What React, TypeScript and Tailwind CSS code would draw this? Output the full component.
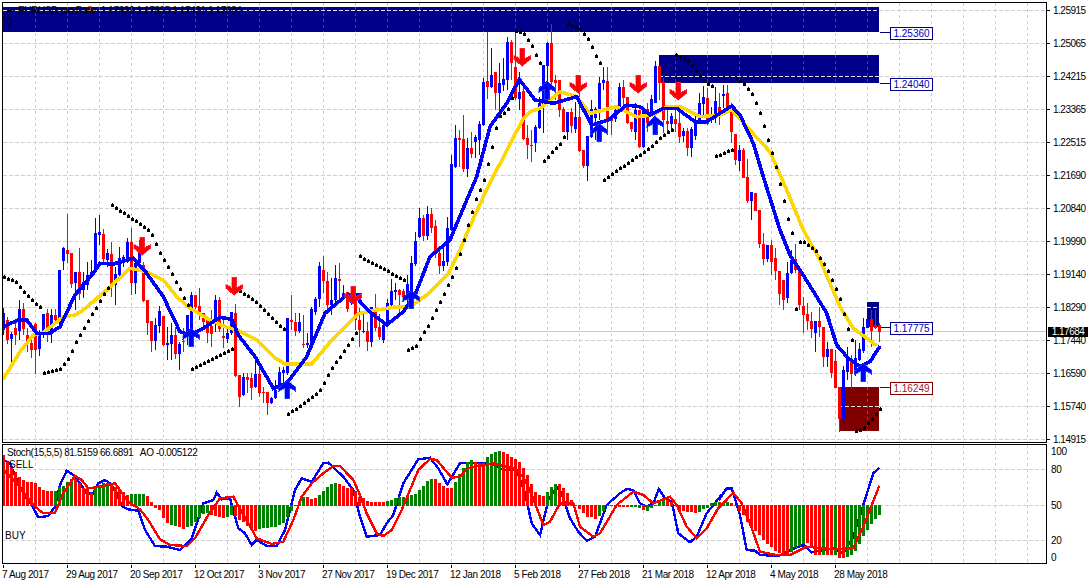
type Pt = [number, number];
type Candle = [string, number, number, number, number];

const candlesRaw: [number, Candle[]][] = [
  [220, [
    ["b",280,330,265,345],["r",300,360,290,372],["b",343,358,335,430],["r",325,345,300,375],["b",268,332,240,360],
    ["r",268,328,250,345],["r",345,372,325,395],["r",370,390,345,415],["r",312,390,310,462],["b",340,386,330,408],
    ["b",282,345,282,355],["r",280,345,268,365],["b",285,335,268,368],["r",285,300,268,310],["b",150,300,150,320],
    ["b",85,122,80,150],["r",90,102,-18,130],["r",100,192,100,205],["b",155,190,155,270],["r",155,222,85,240],
    ["b",185,210,155,235],["b",165,195,125,210],["b",155,170,120,175],["b",40,150,-6,155],["b",35,45,-15,75],
    ["r",42,118,27,130],["b",100,120,88,140],["r",102,195,65,230],["b",162,195,140,255],["b",115,165,80,175],
    ["b",112,125,105,140],["b",65,120,55,130],["r",65,190,25,225],["b",130,190,125,222],["b",85,130,60,135],
    ["r",135,243,125,245],["r",240,308,240,345],["r",302,362,302,395],["b",315,362,295,390],["b",272,318,258,340],
    ["r",288,375,288,378],["b",370,375,320,420],["b",345,372,310,420],["r",345,402,320,418],["b",372,402,365,450],
    ["r",362,365,325,395],["b",285,350,285,375],["b",225,375,215,378],["r",225,262,225,270],["r",258,275,205,300],
    ["r",278,305,278,325],["r",300,340,300,370],["r",318,342,270,380],["b",240,300,225,335],["r",240,328,230,335],
    ["r",348,355,300,385],["b",340,358,320,370],["b",275,340,275,345],["r",280,468,252,470],["r",465,532,465,560],
    ["b",470,525,460,528],["r",472,480,460,520],["r",475,505,460,540],["b",462,502,420,505],["r",462,520,430,530],
    ["r",515,520,500,550],["r",515,550,515,585],["b",535,548,530,552],["b",510,535,480,538],["b",455,510,440,512],
    ["b",450,460,440,490],["b",295,460,295,465],["r",300,305,225,330],["r",305,332,280,348],["b",305,332,280,340],
    ["r",372,375,285,385],["b",370,375,340,385],["b",268,372,260,375],["b",238,275,230,285],["b",138,238,125,260],
    ["r",150,183,108,220],["r",183,255,155,270],["b",240,255,175,285],["b",175,240,135,245],["r",178,182,130,240],
    ["b",220,235,195,240],["r",215,268,215,275],["b",220,250,200,255],["r",238,300,230,330],["r",300,330,265,380],
  ]],
  [200, [
    ["b",393,397,340,400],["r",393,425,365,452],["b",322,425,320,440],["r",328,385,282,392],["r",382,410,342,420],
    ["b",375,420,375,428],["b",310,375,298,378],["b",272,315,238,325],["b",270,275,250,300],["r",270,285,268,335],
    ["r",272,290,268,305],["b",252,300,225,310],["b",190,325,168,328],["b",123,192,95,198],["b",55,112,25,115],
    ["r",55,108,45,122],["b",42,108,18,120],["r",42,85,25,100],["r",78,160,60,175],["r",160,198,150,222],
    ["b",183,198,130,212],["b",85,185,50,198],
  ]],
  [0, [
    ["b",492,690,465,692],["b",415,500,375,505],["r",415,420,390,500],["r",417,508,345,515],["b",445,508,415,530],
    ["r",445,462,395,475],["b",412,425,405,475],["b",372,420,362,465],["b",245,375,235,378],["r",243,260,95,298],
    ["b",225,262,145,265],["r",215,280,215,330],["b",250,280,190,330],["b",238,255,175,272],["b",127,240,110,270],
    ["r",125,188,120,240],["r",200,295,100,300],["b",275,298,215,330],["r",272,417,265,420],["r",415,435,375,478],
    ["r",435,438,390,485],["b",382,428,375,455],["b",310,385,290,388],["b",195,315,195,400],["b",130,198,127,265],
    ["r",130,245,72,265],["r",240,250,225,300],["r",240,330,240,350],["r",328,395,320,395],["b",335,395,335,420],
    ["r",335,378,325,400],["b",350,387,305,400],["r",350,452,265,455],["r",450,498,450,505],["b",408,498,408,542],
    ["b",328,410,300,415],["b",328,355,320,420],["b",248,330,230,360],["b",240,250,200,270],["r",243,362,200,405],
    ["r",358,362,350,405],["b",330,358,325,365],["b",260,330,250,332],["r",260,295,240,320],["r",290,368,290,372],
    ["r",365,388,365,395],["b",330,395,310,420],["r",330,440,330,445],["b",330,440,330,445],["r",328,370,310,395],
    ["b",297,345,285,348],["b",198,308,183,310],["r",198,250,198,300],["r",245,360,235,400],["r",362,372,330,400],
    ["b",348,372,338,395],["r",358,372,320,395],["r",368,410,330,428],["b",392,408,385,425],["r",392,445,385,468],
    ["b",388,445,380,472],["b",360,408,335,420],["b",310,368,280,372],["b",290,312,258,345],["r",295,372,265,375],
    ["b",343,352,320,370],["b",303,345,262,370],["r",320,345,280,375],
    ["b",283,287,255,325],["r",280,325,255,335],["r",320,395,310,430],["r",402,480,402,495],["b",450,483,435,512],
    ["r",450,535,445,535],["r",532,603,478,610],["b",575,603,575,660],["r",580,632,580,632],
  ]],
  [230, [
    ["r",-60,42,-60,55],["r",42,88,10,105],["b",45,88,45,95],["r",45,95,30,135],["r",85,122,55,150],
    ["r",122,192,122,225],["r",150,210,150,240],["b",130,205,95,220],["b",90,130,60,132],["r",88,120,42,130],
    ["r",118,225,118,240],["r",228,255,200,308],["r",252,272,220,300],["r",272,298,245,325],["b",272,310,272,365],
    ["r",272,292,230,320],["r",292,380,290,410],["b",358,380,335,410],["r",358,430,358,445],["r",392,473,360,475],
    ["r",470,567,470,605],["b",420,567,408,595],["b",385,425,350,450],["r",390,432,375,478],["b",385,432,330,438],
    ["b",358,390,340,392],["b",290,362,265,370],["b",268,295,268,295],["r",268,302,240,350],["r",285,293,240,298],
    ["r",285,305,280,335],
  ]],
];

const candles = candlesRaw.flatMap(([base, rows]) =>
  rows.map(([c, top, bot, hi, lo]) => ({
    c,
    top: Math.round(base + top / 3),
    bot: Math.round(base + bot / 3),
    hi: Math.round(base + hi / 3),
    lo: Math.round(base + lo / 3),
  })),
);

// crops were read at 3x, so go back to page pixels
const z = (ox: number, oy: number, pts: Pt[]): Pt[] => pts.map(([x, y]) => [ox + x / 3, oy + y / 3]);
const toPoints = (pts: Pt[]) => pts.map(([x, y]) => `${x.toFixed(1)},${y.toFixed(1)}`).join(" ");

const yellowLine: Pt[] = [
  ...z(0, 220, [[9,478],[60,395],[100,345],[130,338],[190,290],[225,285],[250,270],[320,210],[390,145],[440,155],[490,180],[530,230],[570,265],[630,300],[680,322],[710,330],[770,360],[820,410],[855,432],[935,432],[1000,355],[1077,280]]),
  ...z(360, 200, [[0,340],[50,330],[100,322],[150,320],[200,285],[265,220],[300,150]]),
  ...z(360, 0, [[325,690],[370,590],[410,510],[490,355],[510,335],[540,325],[600,275],[650,290],[690,340],[770,320],[830,350],[880,345],[920,320],[960,320],[1020,350],[1080,345]]),
  ...z(720, 0, [[35,330],[80,380],[150,455],[200,570],[250,690]]),
  ...z(720, 230, [[300,90],[360,230],[400,295],[470,347]]),
];

const blueLine: Pt[] = [
  ...z(0, 220, [[9,320],[55,300],[80,300],[110,340],[150,340],[180,320],[225,225],[280,160],[300,130],[340,132],[400,115],[440,160],[490,230],[540,335],[570,345],[610,325],[660,292],[695,298],[715,345],[765,410],[820,505],[860,490],[920,410],[975,280],[1040,225],[1077,225]]),
  ...z(360, 200, [[0,305],[35,340],[80,375],[130,335],[165,285],[210,170],[270,120]]),
  ...z(360, 0, [[320,600],[350,530],[390,380],[440,310],[478,238],[525,300],[580,310],[650,290],[695,375],[745,360],[800,315],[840,320],[870,345],[910,325],[950,325],[1005,365],[1040,365],[1080,340]]),
  ...z(720, 0, [[35,318],[60,345],[100,430],[130,530],[180,690]]),
  ...z(720, 230, [[210,75],[240,120],[290,200],[320,250],[350,345],[385,385],[420,410],[450,395],[480,348]]),
];

const sarSegments: Pt[][] = [
  z(0, 220, [[9,170],[45,185],[69,213],[117,262]]),
  z(0, 220, [[129,460],[177,448],[201,420],[225,370],[285,265],[321,205]]),
  [...z(0, 0, [[334,615],[442,688]]), ...z(0, 220, [[455,45],[478,97],[513,160],[538,207],[561,255]])],
  z(0, 220, [[573,447],[620,425],[693,388]]),
  z(0, 220, [[705,203],[765,245],[850,328]]),
  z(0, 220, [[861,583],[900,558],[960,510],[990,450],[1020,408],[1065,340]]),
  [...z(0, 220, [[1077,108]]), ...z(360, 200, [[0,170],[130,240]])],
  [...z(360, 200, [[142,450],[166,438],[202,378],[250,282],[285,210],[322,78]]), ...z(360, 0, [[345,602],[370,542],[395,440],[405,388],[420,345],[442,330],[453,295]])],
  z(360, 0, [[465,93],[490,100],[515,138],[538,190]]),
  z(360, 0, [[550,483],[598,432],[610,412]]),
  z(360, 0, [[622,72],[660,87],[682,117],[718,190]]),
  z(360, 0, [[730,540],[800,490],[860,450],[910,405],[933,390]]),
  z(360, 0, [[945,165],[982,183],[1005,212],[1030,243],[1053,258]]),
  [...z(360, 0, [[1065,470]]), ...z(720, 0, [[33,450]])],
  [...z(720, 0, [[45,237],[70,250],[95,283],[118,336],[142,417],[166,500],[190,602],[202,654]]), ...z(720, 230, [[214,10]])],
  z(720, 230, [[226,237]]),
  z(720, 230, [[238,36],[250,36],[286,63],[322,122],[358,205],[382,295],[394,330]]),
  z(720, 230, [[406,603],[430,595],[454,567],[478,538]]),
];

function sarDots(seg: Pt[]): Pt[] {
  const first = Math.round((seg[0][0] - 3.5) / 4);
  const last = Math.round((seg[seg.length - 1][0] - 3.5) / 4);
  const out: Pt[] = [];
  for (let k = first; k <= last; k++) {
    const x = 3 + 4 * k;
    let y = seg[0][1];
    for (let i = 0; i < seg.length - 1; i++) {
      const [x0, y0] = seg[i];
      const [x1, y1] = seg[i + 1];
      if (x + 0.5 >= x0 && x + 0.5 <= x1) y = y0 + ((x + 0.5 - x0) / (x1 - x0 || 1)) * (y1 - y0);
      else if (x + 0.5 > x1) y = y1;
    }
    out.push([x, Math.round(y)]);
  }
  return out;
}

const redArrows: Pt[] = [[142,237],[234,277],[353,286],[522,48],[578,75],[638,75],[678,82]];
const blueArrows: Pt[] = [[191,328],[287,380],[411,290],[547,81],[599,123],[655,116],[863,363]];

// AO histogram: colour + end of the bar in 3x crop pixels, 197 is the zero line
const ao = "r45 r65 r80 r95 r110 r120 r125 r125 r130 r140 r150 r153 r153 g153 g140 g138 g125 g118 r118 r130 r145 r145 r160 g140 g135 g130 g128 r130 r140 r150 r155 r165 g162 g162 g162 g162 r168 r185 r205 r210 r235 r250 g255 g258 r262 r266 g262 g258 g245 g235 g222 g220 r225 r228 r232 r235 g232 g225 r228 r240 r247 r258 r265 r272 g268 g265 g265 g262 g260 g255 g248 g232 g212 g197 g183 g170 r170 r178 r175 g165 g152 g140 g132 g130 r132 r138 r145 r145 r152 r170 r175 r182 r185 r185 r186 r186 g184 g180 g175 g172 g170 g168 g165 g162 g150 g138 g124 g118 r118 r128 r138 r143 r145 g127 g103 g85 g65 g60 r65 r68 r70 g50 g42 g35 g33 r36 r42 r50 r58 r65 r85 r105 r132 r155 r165 r167 g155 g140 g132 r132 r145 r160 r180 r195 r208 r220 r230 r232 r236 g228 g212 g198 g198 r200 r200 r202 r202 g202 g202 g204 r210 g212 g205 g195 g185 g178 r180 r185 r195 r210 r212 r215 r217 r220 g215 g208 g203 g190 g186 g185 g190 g187 r190 r198 r212 r225 r245 r260 r272 r285 r300 r312 r322 r332 r340 r345 r345 g335 g325 g318 g312 r310 r322 r345 r345 g345 r345 r345 g345 r353 r355 g350 g345 g332 g312 g288 g270 g252 g237 g225"
  .split(" ")
  .map((s) => ({ c: s[0], v: Number(s.slice(1)) }));

const stochBlue: Pt[] = [
  ...z(0, 440, [[10,60],[30,70],[55,130],[75,170],[95,195],[115,232],[145,228],[165,200],[180,135],[200,92],[225,108],[260,160],[280,160],[295,130],[315,120],[330,130],[350,160],[365,198],[385,208],[415,212],[435,270],[465,318],[500,320],[540,330],[575,295],[610,190],[640,180],[650,158],[665,178],[690,175],[715,265],[735,280],[755,315],[770,300],[800,318],[830,318],[855,270],[885,150],[905,115],[935,125],[970,70],[985,68],[1030,110],[1060,150],[1080,230]]),
  ...z(360, 440, [[20,290],[60,285],[80,250],[100,225],[130,130],[175,58],[210,53],[235,85],[262,133],[300,70],[320,68],[400,72],[430,90],[470,90],[495,160],[515,250],[540,285],[565,180],[590,140],[605,160],[630,235],[655,275],[680,303],[705,290],[740,195],[780,160],[800,147],[820,150],[840,190],[860,200],[880,190],[897,147],[915,175],[935,185],[955,280],[990,307],[1010,290],[1040,220],[1080,170]]),
  ...z(720, 440, [[0,175],[20,145],[35,145],[60,225],[80,330],[105,332],[120,345],[175,348],[210,330],[250,315],[275,337],[340,325],[370,340],[400,290],[430,195],[460,100],[478,83]]),
];

const stochRed: Pt[] = [
  ...z(0, 440, [[10,90],[50,130],[80,170],[105,200],[130,220],[165,218],[190,160],[225,107],[245,120],[265,145],[300,140],[345,130],[385,185],[420,208],[445,240],[480,298],[510,315],[560,318],[585,295],[625,225],[660,175],[700,170],[745,250],[770,295],[815,312],[850,305],[880,240],[905,170],[935,130],[970,100],[1000,78],[1020,78],[1060,120],[1080,165]]),
  ...z(360, 440, [[0,165],[20,220],[50,280],[70,288],[95,270],[125,210],[175,90],[210,57],[230,60],[275,113],[300,110],[320,85],[400,70],[460,85],[490,110],[515,165],[550,255],[570,245],[600,190],[640,190],[660,260],[700,290],[720,280],[770,195],[820,155],[850,165],[880,190],[930,170],[950,195],[980,260],[1010,295],[1040,265],[1080,195]]),
  ...z(720, 440, [[0,200],[40,158],[65,190],[90,250],[120,335],[170,345],[210,345],[260,320],[340,328],[400,325],[430,260],[478,137]]),
];

const gridX = Array.from({ length: 32 }, (_, i) => 35 + 32 * i).filter((x) => x < 1046);
const gridY = [10, 43, 76, 109, 142, 175, 208, 241, 274, 307, 340, 373, 406, 439];
const bands = [
  { x: 3, y: 7, w: 876, h: 25, fill: "#00008b", vert: "#3c3ca6", lines: [10] },
  { x: 659, y: 55, w: 220, h: 28, fill: "#00008b", vert: "#3c3ca6", lines: [76] },
  { x: 867, y: 302, w: 12, h: 25, fill: "#00008b", vert: "#3c3ca6", lines: [307] },
  { x: 839, y: 387, w: 40, h: 44, fill: "#800000", vert: "#a04040", lines: [406] },
];

const priceLabels = ["1.25915","1.25065","1.24215","1.23365","1.22515","1.21690","1.20840","1.19990","1.19140","1.18290","1.17440","1.16590","1.15740","1.14915"];
const dates = ["7 Aug 2017","29 Aug 2017","20 Sep 2017","12 Oct 2017","3 Nov 2017","27 Nov 2017","19 Dec 2017","12 Jan 2018","5 Feb 2018","27 Feb 2018","21 Mar 2018","12 Apr 2018","4 May 2018","28 May 2018"];

function PriceTag({ text, className }: { text: string; className: string }) {
  return (
    <div className={`absolute left-[887px] flex h-[13px] w-[43px] items-center justify-center border bg-white text-[10px] leading-none ${className}`}>
      {text}
    </div>
  );
}

function MainChart() {
  return (
    <svg width="1043" height="439" viewBox="3 3 1043 439" shapeRendering="crispEdges" className="block">
      {gridX.map((x) => (
        <line key={x} x1={x + 0.5} x2={x + 0.5} y1={3} y2={442} stroke="#cfcfcf" strokeDasharray="3 3" />
      ))}
      {gridY.map((y) => (
        <line key={y} x1={3} x2={1046} y1={y + 0.5} y2={y + 0.5} stroke="#cfcfcf" strokeDasharray="4 2" />
      ))}
      <line x1={3} x2={1046} y1={331.5} y2={331.5} stroke="#c8c8c8" />
      {bands.map((b) => (
        <g key={b.x}>
          <rect x={b.x} y={b.y} width={b.w} height={b.h} fill={b.fill} />
          {gridX
            .filter((x) => x > b.x && x < b.x + b.w)
            .map((x) => (
              <line key={x} x1={x + 0.5} x2={x + 0.5} y1={b.y} y2={b.y + b.h} stroke={b.vert} strokeDasharray="3 3" />
            ))}
          {b.lines.map((y) => (
            <line key={y} x1={b.x} x2={b.x + b.w} y1={y + 0.5} y2={y + 0.5} stroke="#e4e4e4" strokeDasharray="4 2" />
          ))}
        </g>
      ))}
      <path d="M880 32.5H890M880 83.5H890M880 327.5H890" stroke="#00008b" />
      <path d="M880 387.5H890" stroke="#800000" />
      <rect x={90} y={6} width={1} height={4} fill="#e8a020" />
      {candles.map((c, k) => {
        const color = c.c === "b" ? "#0000ff" : "#ff0000";
        const x = 2 + 4 * k;
        return (
          <g key={k} fill={color}>
            <rect x={x + 1} y={c.hi} width={1} height={Math.max(c.lo - c.hi, 1)} />
            <rect x={x} y={c.top} width={3} height={Math.max(c.bot - c.top, 1)} />
          </g>
        );
      })}
      <polyline points={toPoints(yellowLine)} fill="none" stroke="#ffd700" strokeWidth={3.6} />
      <polyline points={toPoints(blueLine)} fill="none" stroke="#0000ff" strokeWidth={3.6} />
      {sarSegments.flatMap(sarDots).map(([x, y], i) => (
        <path key={i} d={`M${x + 1} ${y - 2}h1v1h1v3h-3v-3h1z`} fill="#000" />
      ))}
      {redArrows.map(([x, y]) => (
        <path key={x} transform={`translate(${x} ${y})`} d="M-2.5 0H2.5V10.5L8.5 7V11.5L0 18.5L-8.5 11.5V7L-2.5 10.5Z" fill="#ff0000" stroke="#f04070" strokeWidth={0.5} />
      ))}
      {blueArrows.map(([x, y]) => (
        <path key={x} transform={`translate(${x} ${y})`} d="M-2.5 18.5H2.5V8L8.5 11.5V7L0 0L-8.5 7V11.5L-2.5 8Z" fill="#0000ff" stroke="#3070f0" strokeWidth={0.5} />
      ))}
    </svg>
  );
}

function SubChart() {
  return (
    <svg width="1043" height="118" viewBox="3 445 1043 118" shapeRendering="crispEdges" className="block">
      {gridX.map((x) => (
        <line key={x} x1={x + 0.5} x2={x + 0.5} y1={445} y2={563} stroke="#cfcfcf" strokeDasharray="3 3" />
      ))}
      {[469, 505, 540].map((y) => (
        <line key={y} x1={3} x2={1046} y1={y + 0.5} y2={y + 0.5} stroke="#cfcfcf" strokeDasharray="4 2" />
      ))}
      <polyline points={toPoints(stochBlue)} fill="none" stroke="#0000ff" strokeWidth={2.4} />
      {ao.map((b, k) => {
        const end = 440 + b.v / 3;
        const top = Math.round(Math.min(end, 505));
        const bottom = Math.round(Math.max(end, 506));
        return <rect key={k} x={2 + 4 * k} y={top} width={3} height={Math.max(bottom - top, 1)} fill={b.c === "r" ? "#ff0000" : "#008000"} />;
      })}
      <polyline points={toPoints(stochRed)} fill="none" stroke="#ff0000" strokeWidth={2.4} />
    </svg>
  );
}

export default function App() {
  return (
    <div className="h-[585px] w-[1089px] overflow-hidden bg-white pl-[2px] pt-[2px] font-['Liberation_Sans',sans-serif] text-[10px] leading-none text-black">
      <div className="flex">
        <div className="relative h-[441px] w-[1045px] border border-black">
          <MainChart />
          <div className="absolute left-[4px] top-[3px] flex items-center gap-[5px]">
            <div className="h-0 w-0 border-x-[3px] border-t-[3px] border-x-transparent border-t-black" />
            <span className="whitespace-nowrap tracking-[-0.4px]">EURUSD pro,Daily&nbsp; 1.17829 1.17835 1.17421 1.17684</span>
          </div>
          <div className="absolute left-[4px] top-[15px]">0</div>
          <PriceTag text="1.25360" className="top-[24px] border-[#00008b] text-[#0000c0]" />
          <PriceTag text="1.24040" className="top-[75px] border-[#00008b] text-[#0000c0]" />
          <PriceTag text="1.17775" className="top-[319px] border-[#00008b] text-[#0000c0]" />
          <PriceTag text="1.16249" className="top-[379px] border-[#800000] text-[#a02020]" />
        </div>
        <div className="relative flex h-[441px] flex-col gap-[18px] pt-[1px]">
          {priceLabels.map((p) => (
            <div key={p} className="flex h-[15px] shrink-0 items-center">
              <div className="mr-[3px] h-px w-[3px] bg-black" />
              <span className="tracking-[-0.5px]">{p}</span>
            </div>
          ))}
          <div className="absolute left-[1px] top-[325px] flex h-[10px] w-[40px] items-center justify-center bg-black tracking-[-0.5px] text-white">1.17684</div>
        </div>
      </div>
      <div className="mt-px flex">
        <div className="relative h-[120px] w-[1045px] border border-black">
          <SubChart />
          <div className="absolute left-[4px] top-[3px] whitespace-pre tracking-[-0.4px]">Stoch(15,5,5) 81.5159 66.6891   AO -0.005122</div>
          <div className="absolute left-[6px] top-[15px]">SELL</div>
          <div className="absolute left-[2px] top-[86px]">BUY</div>
        </div>
        <div className="flex flex-col pl-[4px] tracking-[-0.3px]">
          <div className="flex h-[15px] items-center">100</div>
          <div className="mt-[3px] flex h-[15px] items-center">80</div>
          <div className="mt-[21px] flex h-[15px] items-center">50</div>
          <div className="mt-[20px] flex h-[15px] items-center">20</div>
          <div className="mt-[2px] flex h-[15px] items-center">0</div>
        </div>
      </div>
      <div className="flex pl-px">
        {dates.map((d) => (
          <div key={d} className="w-[64px] shrink-0">
            <div className="h-[3px] w-px bg-black" />
            <div className="-ml-px mt-[2px] whitespace-nowrap tracking-[-0.4px]">{d}</div>
          </div>
        ))}
      </div>
    </div>
  );
}
